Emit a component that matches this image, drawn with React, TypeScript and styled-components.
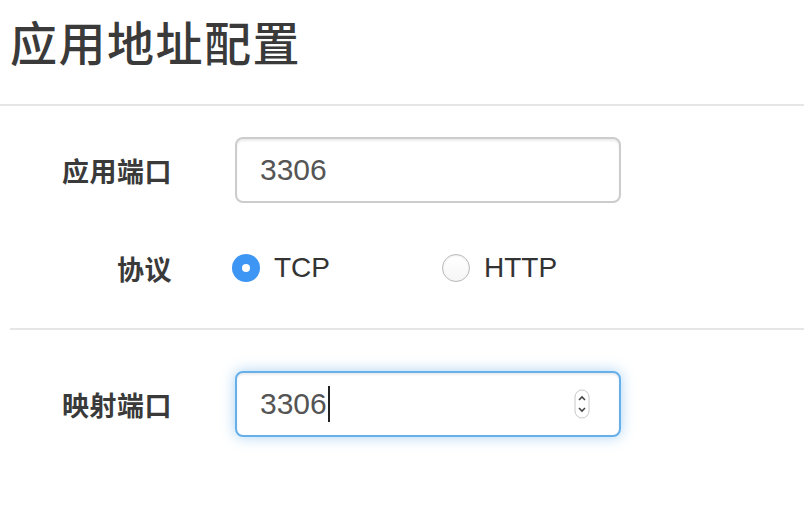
import React from "react";
import styled, { createGlobalStyle } from "styled-components";

const Global = createGlobalStyle`
  html, body { margin: 0; padding: 0; background: #fff; }
  body { font-family: "Liberation Sans", "Noto Sans CJK SC", sans-serif; color: #333; }
`;

const Page = styled.div`
  width: 804px;
  height: 516px;
  overflow: hidden;
  background: #fff;
`;

const Header = styled.div`
  padding: 14px 0 0 10px;
  height: 90px;
`;

const Title = styled.h3`
  margin: 0;
  font-family: "Noto Sans CJK SC", sans-serif;
  font-size: 47px;
  line-height: 54px;
  font-weight: 500;
  color: #3a3a3a;
  letter-spacing: 1.5px;
`;

const Divider = styled.div<{ $inset?: number; $mt?: number; $mb?: number }>`
  height: 2px;
  background: #e6e6e6;
  margin: ${(p) => p.$mt ?? 0}px 0 ${(p) => p.$mb ?? 0}px ${(p) => p.$inset ?? 0}px;
`;

const Form = styled.div`
  padding-top: 31px;
`;

const Row = styled.div<{ $mb?: number }>`
  display: flex;
  align-items: center;
  height: 66px;
  margin-bottom: ${(p) => p.$mb ?? 0}px;
`;

const Label = styled.div`
  width: 172px;
  text-align: right;
  font-family: "Noto Sans CJK SC", sans-serif;
  font-size: 27px;
  font-weight: 700;
  color: #3a3a3a;
  margin-right: 63px;
  letter-spacing: 0.5px;
`;

const Field = styled.div<{ $focused?: boolean }>`
  position: relative;
  box-sizing: border-box;
  width: 386px;
  height: 66px;
  display: flex;
  align-items: center;
  padding: 0 23px;
  border: 2px solid ${(p) => (p.$focused ? "#66afe9" : "#cccccc")};
  border-radius: 8px;
  background: #fff;
  font-size: 30px;
  color: #555;
  box-shadow: ${(p) =>
    p.$focused
      ? "inset 0 2px 2px rgba(0,0,0,.075), 0 0 14px rgba(102,175,233,.55)"
      : "inset 0 2px 2px rgba(0,0,0,.075)"};
`;

const Caret = styled.span`
  display: inline-block;
  width: 2px;
  height: 36px;
  background: #222;
  margin-left: 1px;
`;

const Spinner = styled.svg`
  position: absolute;
  right: 29px;
  top: 50%;
  transform: translateY(-50%);
`;

const RadioGroup = styled.div`
  display: flex;
  align-items: center;
  margin-left: -3px;
`;

const Option = styled.label`
  display: flex;
  align-items: center;
  width: 210px;
  font-size: 28px;
  color: #333;
`;

const Dot = styled.span<{ $checked?: boolean }>`
  box-sizing: border-box;
  width: 28px;
  height: 28px;
  border-radius: 50%;
  margin-right: 14px;
  display: flex;
  align-items: center;
  justify-content: center;
  background: ${(p) => (p.$checked ? "#3d95f4" : "linear-gradient(#fff, #f6f6f6)")};
  border: ${(p) => (p.$checked ? "none" : "1.5px solid #b8b8b8")};
  box-shadow: ${(p) => (p.$checked ? "none" : "inset 0 1px 2px rgba(0,0,0,.06)")};
  &::after {
    content: "";
    display: ${(p) => (p.$checked ? "block" : "none")};
    width: 8px;
    height: 8px;
    border-radius: 50%;
    background: #fff;
  }
`;

export default function App() {
  return (
    <Page>
      <Global />
      <Header>
        <Title>应用地址配置</Title>
      </Header>
      <Divider />
      <Form>
        <Row $mb={32}>
          <Label>应用端口</Label>
          <Field>3306</Field>
        </Row>
        <Row>
          <Label>协议</Label>
          <RadioGroup>
            <Option>
              <Dot $checked />
              TCP
            </Option>
            <Option>
              <Dot />
              HTTP
            </Option>
          </RadioGroup>
        </Row>
        <Divider $inset={10} $mt={27} $mb={41} />
        <Row>
          <Label>映射端口</Label>
          <Field $focused>
            3306
            <Caret />
            <Spinner width="16" height="30" viewBox="0 0 16 30">
              <rect x="1" y="1" width="14" height="28" rx="7" fill="#fff" stroke="#c8c8c8" strokeWidth="1" />
              <path d="M5 11 L8 8 L11 11" fill="none" stroke="#444" strokeWidth="1.6" />
              <path d="M5 19 L8 22 L11 19" fill="none" stroke="#444" strokeWidth="1.6" />
            </Spinner>
          </Field>
        </Row>
      </Form>
    </Page>
  );
}
